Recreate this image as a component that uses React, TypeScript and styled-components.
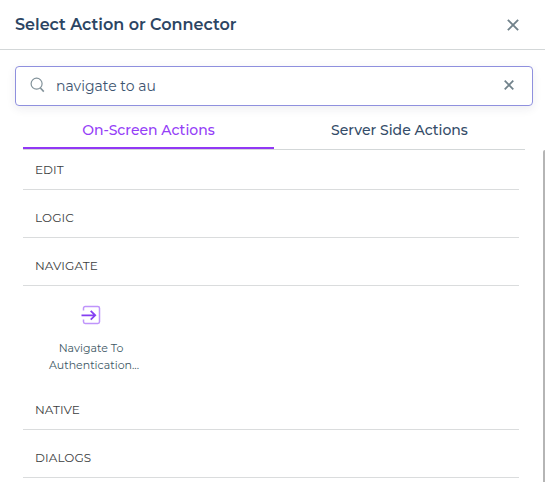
import React from "react";
import styled, { createGlobalStyle } from "styled-components";

const GlobalStyle = createGlobalStyle`
  * { box-sizing: border-box; }
  html, body { margin: 0; overflow: hidden; background: #fff; }
  body { font-family: Montserrat, Inter, "Open Sans", sans-serif; color: #2c4563; }
  button, input { font: inherit; color: inherit; border: 0; padding: 0; background: none; outline: none; }
  svg { display: block; flex: none; }
`;

const Dialog = styled.main`
  width: 545px;
  height: 482px;
  display: flex;
  flex-direction: column;
  overflow: hidden;
`;

const Header = styled.header`
  height: 50px;
  flex: none;
  display: flex;
  align-items: center;
  justify-content: space-between;
  padding: 0 26px 0 15px;
  border-bottom: 1px solid #d3d7d8;
`;

const Title = styled.h1`
  margin: 0;
  font-size: 16px;
  line-height: 20px;
  font-weight: 600;
  white-space: nowrap;
`;

const IconButton = styled.button`
  display: flex;
  color: #71828b;
`;

const CloseButton = styled(IconButton)`
  padding-top: 1px;
`;

const SearchBox = styled.label`
  height: 40px;
  flex: none;
  margin: 16px 12px 0 15px;
  padding: 0 18px 2px 14px;
  display: flex;
  align-items: center;
  gap: 11px;
  border: 1px solid #8f90de;
  border-radius: 4px;
  box-shadow: 0 3px 10px rgba(40, 40, 80, 0.08);
`;

const SearchInput = styled.input`
  flex: 1;
  min-width: 0;
  height: 26px;
  padding-top: 2px;
  font-size: 14px;
  color: #3d5470;
`;

const Tabs = styled.nav`
  height: 44px;
  flex: none;
  display: grid;
  grid-template-columns: 1fr 1fr;
  margin: 0 20px 0 23px;
  border-bottom: 1px solid #d3d7d8;
`;

const Tab = styled.button<{ $active?: boolean }>`
  padding-top: 7px;
  font-size: 14px;
  line-height: 20px;
  font-weight: 500;
  color: ${(p) => (p.$active ? "#9540f7" : "#344c68")};
  border-bottom: 2px solid ${(p) => (p.$active ? "#9138f5" : "transparent")};
`;

const ScrollArea = styled.div`
  flex: 1;
  min-height: 0;
  display: flex;
  justify-content: space-between;
  padding-left: 23px;
`;

const Sections = styled.div`
  width: 496px;
  display: flex;
  flex-direction: column;
  gap: 8px;
`;

const ScrollThumb = styled.div`
  width: 2px;
  background: #b5b5b5;
  border-radius: 2px 0 0 0;
`;

const SectionTitle = styled.h2`
  height: 40px;
  margin: 0;
  padding-left: 12px;
  font-size: 12px;
  line-height: 39px;
  font-weight: 400;
  letter-spacing: 0.08px;
  color: #3c3e40;
  border-bottom: 1px solid #dadcdd;
`;

const SectionBody = styled.div`
  height: 96px;
  padding: 19px 0 0 22px;
`;

const Action = styled.button`
  width: 92px;
  display: flex;
  flex-direction: column;
  align-items: center;
  gap: 15px;
`;

const ActionLabel = styled.span`
  width: 92px;
  display: flex;
  flex-direction: column;
  font-size: 11px;
  line-height: 17px;
  white-space: nowrap;
  color: #405865;
`;

const ClippedLine = styled.span`
  padding-left: 4px;
  text-align: left;
`;

const CrossIcon = ({ size, weight }: { size: number; weight: number }) => (
  <svg width={size} height={size} viewBox="0 0 14 14" fill="none" stroke="currentColor" strokeWidth={weight}>
    <path d="M1 1 13 13M13 1 1 13" />
  </svg>
);

const SearchIcon = () => (
  <svg width="15" height="16" viewBox="0 0 15 16" fill="none" stroke="#82929a" strokeWidth="1.2">
    <circle cx="6.6" cy="6.7" r="5.5" />
    <path d="m10.4 11 3.4 3.6" strokeWidth="1.6" />
  </svg>
);

const NavigateIcon = () => (
  <svg width="20" height="20" viewBox="0 0 20 20" fill="none">
    <path
      d="M2.5 5.5V3.2a1.7 1.7 0 0 1 1.7-1.7h12.6a1.7 1.7 0 0 1 1.7 1.7v13.6a1.7 1.7 0 0 1-1.7 1.7H4.2a1.7 1.7 0 0 1-1.7-1.7v-2.3"
      stroke="#bf94fb"
      strokeWidth="1.5"
    />
    <path d="M.5 10.3H14M9.7 5.9l4.5 4.4-4.5 4.4" stroke="#853ff2" strokeWidth="1.8" />
  </svg>
);

type Section = { name: string; action?: [string, string] };

const sections: Section[] = [
  { name: "EDIT" },
  { name: "LOGIC" },
  { name: "NAVIGATE", action: ["Navigate To", "Authentication..."] },
  { name: "NATIVE" },
  { name: "DIALOGS" },
];

export default function App() {
  return (
    <Dialog>
      <GlobalStyle />
      <Header>
        <Title>Select Action or Connector</Title>
        <CloseButton aria-label="Close"><CrossIcon size={12} weight={2.2} /></CloseButton>
      </Header>
      <SearchBox>
        <SearchIcon />
        <SearchInput defaultValue="navigate to au" aria-label="Search actions" />
        <IconButton aria-label="Clear search"><CrossIcon size={10} weight={2.5} /></IconButton>
      </SearchBox>
      <Tabs>
        <Tab $active>On-Screen Actions</Tab>
        <Tab>Server Side Actions</Tab>
      </Tabs>
      <ScrollArea>
        <Sections>
          {sections.map(({ name, action }) => (
            <section key={name}>
              <SectionTitle>{name}</SectionTitle>
              {action && (
                <SectionBody>
                  <Action>
                    <NavigateIcon />
                    <ActionLabel>
                      <span>{action[0]}</span>
                      <ClippedLine>{action[1]}</ClippedLine>
                    </ActionLabel>
                  </Action>
                </SectionBody>
              )}
            </section>
          ))}
        </Sections>
        <ScrollThumb />
      </ScrollArea>
    </Dialog>
  );
}
